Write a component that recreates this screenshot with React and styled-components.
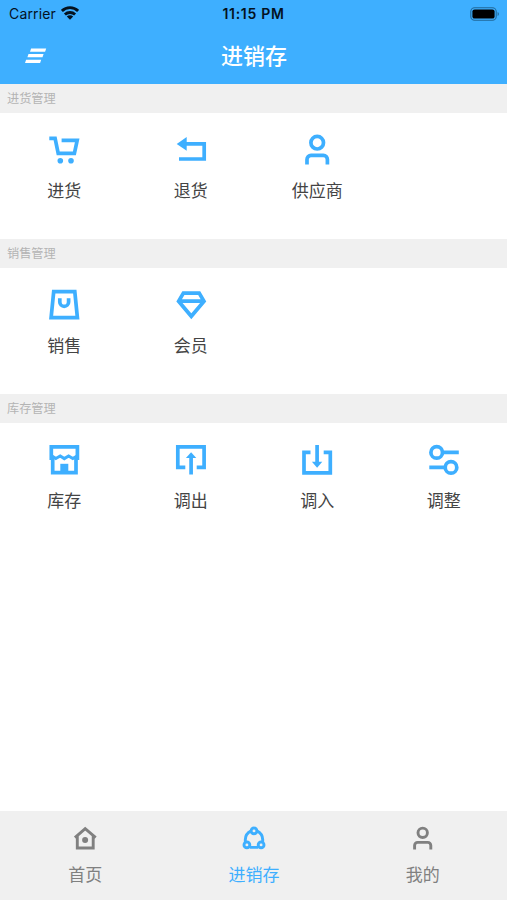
import styled, { createGlobalStyle } from "styled-components";

const GlobalStyle = createGlobalStyle`
  * {
    box-sizing: border-box;
  }
  body {
    margin: 0;
    background: #fff;
    font-family: "Noto Sans CJK SC", sans-serif;
  }
`;

const icons = {
  cart: (
    <>
      <path d="M1.3 4.3H7.1L10.2 19.3H26.4L29.2 6.3H13.6" />
      <circle className="solid" cx="12.3" cy="26.7" r="2.8" />
      <circle className="solid" cx="23" cy="26.7" r="2.8" />
    </>
  ),
  back: (
    <>
      <path d="M9 9.8H29.2V25H4" />
      <path className="solid" d="M1.7 9.9 11.7 3V16.8Z" />
    </>
  ),
  person: (
    <>
      <circle cx="16.2" cy="8.7" r="6.3" />
      <path d="M6 30.6V25.4a4 4 0 0 1 4-4H22.4a4 4 0 0 1 4 4V30.6" />
    </>
  ),
  bag: (
    <>
      <path d="M5.7 2.7H26.8L29.4 28.7H3.1Z" />
      <path d="M11.8 9.3v3.6a4.4 4.4 0 0 0 8.8 0V9.3" />
    </>
  ),
  diamond: (
    <path d="M8.4 4.1H24.2L29 12.2 16.3 27.3 3.6 12.2ZM4 12.2H29" />
  ),
  shop: (
    <>
      <path d="M3.3 16V2.9H29.4V16" />
      <path d="M4.7 14V28.7H28V14" />
      <path d="M4 12 7.8 14.5 12.2 11.9 16.3 14.6 20.6 11.9 24.8 14.5 29 12" strokeWidth="3" />
      <path className="solid" d="M12.3 19.8H20.3V29H12.3Z" />
    </>
  ),
  out: (
    <>
      <path d="M10.3 23.3H2.8V2.8H29.1V23.3H21.7M16.1 30.4V12" />
      <path className="solid" d="M16.1 8.2 21.3 14H10.9Z" />
    </>
  ),
  in: (
    <>
      <path d="M9.5 8.4H3V28.8H29.3V8.4H22.7M16.1 1V19" />
      <path className="solid" d="M16.1 23.8 10.9 17.8H21.3Z" />
    </>
  ),
  adjust: (
    <>
      <circle cx="8.7" cy="8.4" r="5.8" />
      <path d="M14.5 8.4H30.8M1.3 23.4H17.2" />
      <circle cx="23" cy="23.4" r="5.8" />
    </>
  ),
};

const tabIcons = {
  home: (
    <>
      <path d="M1.9 11.6 12.2 2.6 22.7 11.6M4.3 10V22H20.2V10" />
      <circle className="solid" cx="12.1" cy="14" r="3" />
    </>
  ),
  share: (
    <>
      <circle cx="12" cy="4.9" r="2.9" />
      <circle cx="4.9" cy="18.9" r="2.9" />
      <circle cx="19.1" cy="18.9" r="2.9" />
      <path d="M9.3 4.8C5 6.8 2.6 11 3.5 16.4M14.7 4.8C19 6.8 21.4 11 20.5 16.4M7.8 21.4H16.2" />
    </>
  ),
  me: (
    <>
      <circle cx="11.7" cy="6.8" r="4.7" />
      <path d="M3.6 23.4V19.4a3 3 0 0 1 3-3H16.8a3 3 0 0 1 3 3V23.4" />
    </>
  ),
};

const sections = [
  {
    title: "进货管理",
    items: [
      { icon: "cart", label: "进货" },
      { icon: "back", label: "退货" },
      { icon: "person", label: "供应商" },
    ],
  },
  {
    title: "销售管理",
    items: [
      { icon: "bag", label: "销售" },
      { icon: "diamond", label: "会员" },
    ],
  },
  {
    title: "库存管理",
    items: [
      { icon: "shop", label: "库存" },
      { icon: "out", label: "调出" },
      { icon: "in", label: "调入" },
      { icon: "adjust", label: "调整" },
    ],
  },
];

const tabs = [
  { icon: "home", label: "首页" },
  { icon: "share", label: "进销存", active: true },
  { icon: "me", label: "我的" },
];

function StatusBar() {
  return (
    <StatusRow>
      <Carrier>
        Carrier
        <svg width="18" height="14" viewBox="0 0 18 14">
          <g fill="none" stroke="#04121f" strokeWidth="2.8">
            <path d="M0.9 4.9a11.6 11.6 0 0 1 16.2 0" />
            <path d="M3.9 8.6a7.3 7.3 0 0 1 10.2 0" />
          </g>
          <path fill="#04121f" d="M9 13.7 5.8 10.6a4.6 4.6 0 0 1 6.4 0Z" />
        </svg>
      </Carrier>
      <Time>11:15 PM</Time>
      <Battery>
        <svg width="30" height="14" viewBox="0 0 30 14">
          <rect x="0.8" y="0.8" width="25.4" height="12.4" rx="3.8" fill="none" stroke="#216899" strokeWidth="1.1" />
          <rect x="2.4" y="2.4" width="22.2" height="9.2" rx="2.2" fill="#000" />
          <path d="M27.6 5a2.2 2.2 0 0 1 0 4Z" fill="#216899" />
        </svg>
      </Battery>
    </StatusRow>
  );
}

function Section({ title, items }) {
  return (
    <section>
      <SectionTitle>{title}</SectionTitle>
      <Grid>
        {items.map((item) => (
          <Item key={item.label}>
            <Icon viewBox="0 0 32 32">{icons[item.icon]}</Icon>
            {item.label}
          </Item>
        ))}
      </Grid>
    </section>
  );
}

function App() {
  return (
    <Page>
      <GlobalStyle />
      <Header>
        <StatusBar />
        <NavBar>
          <svg width="22" height="16" viewBox="0 0 22 16" fill="#fff">
            <path d="M6.1 0.6H21.2L20.1 3.8H5ZM3.5 6.1H18.6L17.5 9.3H2.4ZM1.1 11.7H16.2L15.1 14.9H0Z" />
          </svg>
          <Title>进销存</Title>
        </NavBar>
      </Header>
      <Main>
        {sections.map((section) => (
          <Section key={section.title} {...section} />
        ))}
      </Main>
      <TabBar>
        {tabs.map((tab) => (
          <Tab key={tab.label} $active={tab.active}>
            <TabIcon viewBox="0 0 24 24">{tabIcons[tab.icon]}</TabIcon>
            {tab.label}
          </Tab>
        ))}
      </TabBar>
    </Page>
  );
}

const Page = styled.div`
  display: flex;
  flex-direction: column;
  height: 900px;
  overflow: hidden;
`;

const Header = styled.header`
  height: 84px;
  background: #3eafff;
`;

const StatusRow = styled.div`
  display: grid;
  grid-template-columns: 1fr auto 1fr;
  align-items: center;
  height: 27px;
  padding: 0 7px 0 9px;
  color: #04121f;
  font-family: Inter, sans-serif;
  font-size: 14px;
`;

const Carrier = styled.div`
  display: flex;
  align-items: center;
  gap: 5px;
  letter-spacing: 0.15px;
  svg {
    margin-top: -2px;
  }
`;

const Time = styled.div`
  margin-right: 2px;
  font-weight: 600;
  letter-spacing: 0.7px;
`;

const Battery = styled.div`
  display: flex;
  justify-content: flex-end;
`;

const NavBar = styled.div`
  display: grid;
  grid-template-columns: 60px 1fr 60px;
  align-items: center;
  height: 57px;
  svg {
    margin-left: 25px;
  }
`;

const Title = styled.h1`
  margin: -4px 0 0 1px;
  color: #fff;
  font-size: 22px;
  font-weight: 500;
  line-height: 30px;
  text-align: center;
`;

const Main = styled.main`
  flex: 1;
`;

const SectionTitle = styled.h2`
  height: 29px;
  margin: 0;
  padding-left: 7px;
  background: #f0f0f0;
  color: #b4b4b4;
  font-size: 12.2px;
  font-weight: 400;
  line-height: 28px;
`;

const Grid = styled.div`
  display: grid;
  grid-template-columns: repeat(4, 1fr);
  height: 126px;
  padding: 21px 0 0 1px;
`;

const Item = styled.div`
  display: flex;
  flex-direction: column;
  align-items: center;
  gap: 11px;
  color: #444;
  font-size: 17px;
  line-height: 25px;
`;

const Icon = styled.svg`
  width: 32px;
  height: 32px;
  fill: none;
  stroke: #3eafff;
  stroke-width: 3.7;
  .solid {
    fill: #3eafff;
    stroke: none;
  }
`;

const TabBar = styled.nav`
  display: grid;
  grid-template-columns: repeat(3, 1fr);
  height: 89px;
  padding: 15px 0 0 1px;
  background: #f0f0f0;
`;

const Tab = styled.div`
  display: flex;
  flex-direction: column;
  align-items: center;
  gap: 11px;
  color: ${({ $active }) => ($active ? "#3eafff" : "#808080")};
  font-size: 17px;
  line-height: 25px;
`;

const TabIcon = styled.svg`
  width: 24px;
  height: 24px;
  fill: none;
  stroke: currentColor;
  stroke-width: 2.9;
  .solid {
    fill: currentColor;
    stroke: none;
  }
`;

export default App;
